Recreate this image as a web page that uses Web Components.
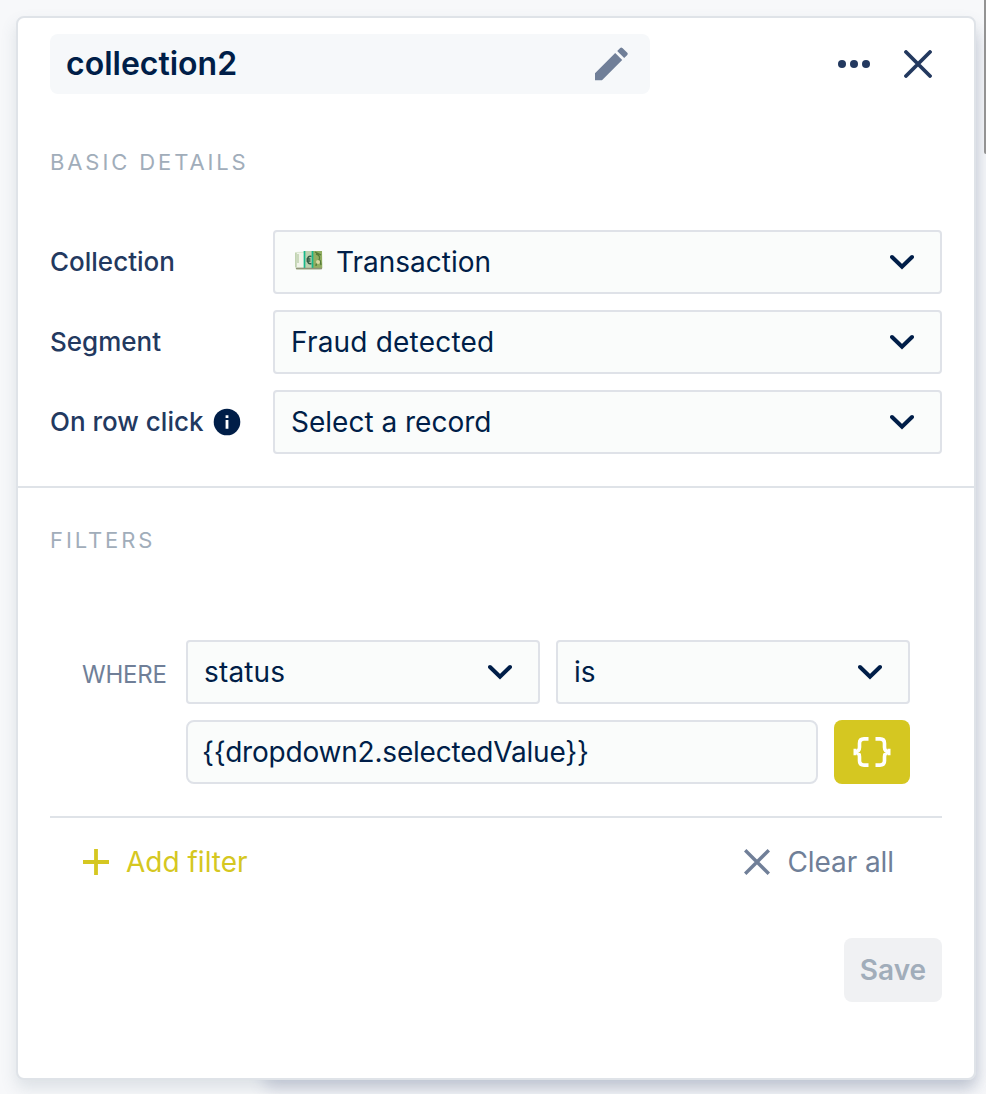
<!DOCTYPE html>
<html lang="en">
<head>
<meta charset="utf-8">
<title>collection2</title>
<style>
html,body{margin:0;height:100%}
body{background:#f7f8fa;font-family:Inter,"Liberation Sans",sans-serif;color:#001e48;overflow:hidden}
</style>
</head>
<body>
<settings-page></settings-page>
<script>
const define = (name, html) => customElements.define(name, class extends HTMLElement {
  constructor() {
    super();
    const t = document.createElement('template');
    t.innerHTML = html;
    this.attachShadow({mode: 'open'}).append(t.content.cloneNode(true));
  }
});

const icons = {
  pencil: [36, 36, '<path d="M2 34.2v-7L22.2 7l7 7L9 34.2zM24.2 5l3-3.1q1.1-1 2.2 0l4.9 4.8q1 1.1 0 2.2L31.2 12z" fill="currentColor"/>'],
  dots: [32, 8, '<circle cx="4" cy="4" r="4"/><circle cx="16" cy="4" r="4"/><circle cx="28" cy="4" r="4"/>'],
  close: [28, 28, '<path d="M2 2l24 24M26 2L2 26" fill="none" stroke="currentColor" stroke-width="3.8" stroke-linecap="round"/>'],
  chevron: [24, 16, '<path d="M2 3l10 9.8L22 3" fill="none" stroke="currentColor" stroke-width="4" stroke-linecap="round"/>'],
  info: [28, 28, '<circle cx="14" cy="14" r="13.3"/><path d="M12.6 7.2h2.8v2.9h-2.8zM12.6 12h2.8v8.8h-2.8z" fill="#fff"/>'],
  braces: [38, 32, '<path d="M15.5 2.9H11q-4.5 0-4.5 4.5v3.8q0 4.8-5.3 4.8 5.3 0 5.3 4.8v3.8q0 4.5 4.5 4.5h4.5M22.5 2.9H27q4.5 0 4.5 4.5v3.8q0 4.8 5.3 4.8-5.3 0-5.3 4.8v3.8q0 4.5-4.5 4.5h-4.5" fill="none" stroke="currentColor" stroke-width="3.6"/><path d="M.5 12.7h3v6.6h-3zM34.5 12.7h3v6.6h-3z" fill="currentColor"/>'],
  plus: [26, 26, '<path d="M0 13h26M13 0v26" fill="none" stroke="currentColor" stroke-width="3.8"/>'],
  cross: [26, 26, '<path d="M1.2 1.2l23.6 23.6M24.8 1.2L1.2 24.8" fill="none" stroke="currentColor" stroke-width="3.4"/>'],
  euro: [30, 22, '<path d="M1 2l27-1 1 17-3 2H3l-2-2z" fill="#dce8d2"/><path d="M2 3h8v14H2z" fill="#f0f4e9"/><path d="M2 3v14M4 4v9" stroke="#a5bf91" stroke-width="1"/><path d="M19 1h9v18h-9z" fill="#92ae61"/><path d="M22 4c4 1 4 4 3 6s-3 3-3 6M21 2l6 3M26 10l1 5" stroke="#557b38" stroke-width="1.3" fill="none"/><circle cx="24" cy="12" r="2" fill="#d9d9a2"/><path d="M11 1h7v18h-7z" fill="#bcd1ae"/><path d="M17.5 6.5q-4-1-4 3.500t4 3.500M12.500 9h4M12.500 11h4" stroke="#325d46" stroke-width="1.500" fill="none"/><path d="M10.500 1v18M18.500 1v18" stroke="#16b88a" stroke-width="1.700"/><path d="M2 18.500h26" stroke="#8f9277" stroke-width="1.500"/>']
};
customElements.define('ui-icon', class extends HTMLElement {
  constructor() { super(); this.attachShadow({mode: 'open'}); }
  connectedCallback() {
    const [w, h, body] = icons[this.getAttribute('name')];
    this.shadowRoot.innerHTML = `<style>:host{display:block;flex:none;width:${w}px;height:${h}px}svg{display:block}</style><svg width="${w}" height="${h}" viewBox="0 0 ${w} ${h}" fill="currentColor">${body}</svg>`;
  }
});

define('section-title', `<style>:host{display:block;font-size:22px;line-height:28px;letter-spacing:2.9px;color:#a1adba;white-space:nowrap}</style><slot></slot>`);

define('select-field', `<style>
:host{display:flex;align-items:center;box-sizing:border-box;height:64px;min-width:0;border:2px solid #dfe2e8;border-radius:4px;background:#fafcfb;padding:0 26px 0 16px;font-size:28px;letter-spacing:var(--tracking,0);line-height:36px;white-space:nowrap}
.value{flex:1;display:flex;align-items:center}
::slotted(ui-icon){margin:-2px 12px 0 3px}
</style><div class="value"><slot></slot></div><ui-icon name="chevron"></ui-icon>`);

define('text-field', `<style>
:host{display:flex;align-items:center;box-sizing:border-box;height:64px;border:2px solid #dfe2e8;border-radius:8px;background:#fafcfb;padding:0 14px;font-size:28px;letter-spacing:-.2px;line-height:36px;white-space:nowrap}
</style><slot></slot>`);

define('form-row', `<style>
:host{display:grid;grid-template-columns:223px 1fr;align-items:center}
.label{display:flex;align-items:center;gap:10px;font-size:26px;line-height:36px;font-weight:500;color:#23395f;white-space:nowrap}
::slotted([slot=hint]){color:#001e48}
</style><div class="label"><slot name="label"></slot><slot name="hint"></slot></div><slot></slot>`);

define('panel-header', `<style>
:host{display:flex;align-items:center;height:60px;color:#23395f}
.name{box-sizing:border-box;width:600px;height:60px;border-radius:8px;background:#f6f8fa;display:flex;align-items:center;justify-content:space-between;padding:0 21px 0 16px;font-size:32px;line-height:40px;font-weight:600;color:#001e48}
.name ui-icon{color:#707f98}
.actions{display:flex;align-items:center;gap:34px;margin-left:auto;margin-right:10px}
</style><div class="name"><span><slot></slot></span><ui-icon name="pencil"></ui-icon></div>
<div class="actions"><ui-icon name="dots"></ui-icon><ui-icon name="close"></ui-icon></div>`);

define('filter-editor', `<style>
:host{display:block}
.grid{display:grid;grid-template-columns:88px 354px 354px;column-gap:16px;row-gap:16px;align-items:center;padding-left:32px;padding-bottom:32px;border-bottom:2px solid #dfe3e8}
.where{font-size:24px;line-height:32px;letter-spacing:-.2px;color:#707f98;padding-top:6px}
.value{grid-column:2 / 4;display:flex;gap:16px}
text-field{flex:1}
button{width:76px;height:64px;border:0;border-radius:8px;background:#d5c721;color:#fff;padding:0;display:flex;align-items:center;justify-content:center}
.actions{display:flex;justify-content:space-between;padding:26px 48px 0 33px;font-size:28px;line-height:36px;white-space:nowrap}
.actions div{display:flex;align-items:center;gap:17px}
.add{color:#d5c721}
.clear{color:#707f98;letter-spacing:-.08px}
</style>
<div class="grid"><span class="where">WHERE</span><select-field style="--tracking:.15px">status</select-field><select-field>is</select-field>
<div class="value"><text-field>{{dropdown2.selectedValue}}</text-field><button><ui-icon name="braces"></ui-icon></button></div></div>
<div class="actions"><div class="add"><ui-icon name="plus"></ui-icon><span>Add filter</span></div><div class="clear"><ui-icon name="cross"></ui-icon><span>Clear all</span></div></div>`);

define('save-button', `<style>
:host{display:flex;justify-content:flex-end}
button{width:98px;height:64px;padding:0;border:0;border-radius:8px;background:#f0f1f3;color:#a1adba;font:600 28px/36px Inter,"Liberation Sans",sans-serif}
</style><button><slot></slot></button>`);

define('settings-page', `<style>
:host{display:block;position:relative;box-sizing:border-box;height:1094px;padding:16px 10px 14px 16px;overflow:hidden}
.under{position:absolute;left:264px;right:10px;top:26px;height:1054px;border-radius:8px;box-shadow:0 8px 16px rgba(72,83,132,.22)}
.scroll{position:absolute;right:0;top:0;width:2px;height:154px;background:#939393;border-radius:0 0 0 2px}
.panel{position:relative;box-sizing:border-box;height:1064px;border:2px solid #dfe3e8;border-radius:8px;background:#fff;box-shadow:0 8px 16px rgba(80,105,125,.16)}
.basic{padding:16px 32px 32px;border-bottom:2px solid #dfe3e8}
.basic section-title{margin-top:54px}
.rows{display:grid;gap:16px;margin-top:54px}
.filters{padding:38px 32px 0}
filter-editor{margin-top:86px}
save-button{margin-top:58px}
</style>
<div class="under"></div>
<div class="panel">
<div class="basic"><panel-header>collection2</panel-header><section-title>BASIC DETAILS</section-title>
<div class="rows">
<form-row><span slot="label">Collection</span><select-field><ui-icon name="euro"></ui-icon>Transaction</select-field></form-row>
<form-row><span slot="label">Segment</span><select-field style="--tracking:.2px">Fraud detected</select-field></form-row>
<form-row><span slot="label">On row click</span><ui-icon slot="hint" name="info"></ui-icon><select-field>Select a record</select-field></form-row>
</div></div>
<div class="filters"><section-title>FILTERS</section-title><filter-editor></filter-editor><save-button>Save</save-button></div>
</div><div class="scroll"></div>`);
</script>
</body>
</html>
